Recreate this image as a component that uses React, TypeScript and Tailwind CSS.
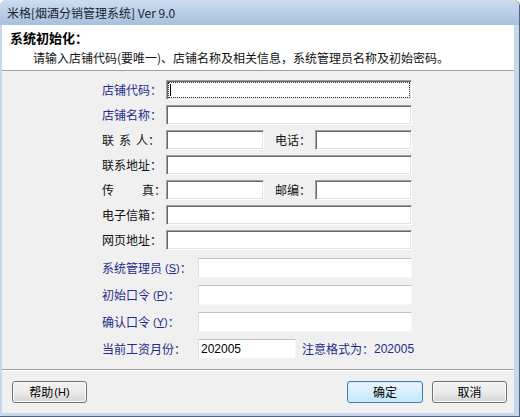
import React from 'react'

const FONT = { fontFamily: '"Noto Sans CJK SC", "Liberation Sans", sans-serif' }

// sunken 3D edit box (classic style)
function Sunken({ w, focused }: { w: string; focused?: boolean }) {
  return (
    <div
      className={`${w} relative h-[20px] bg-white border border-t-[#a0a0a0] border-l-[#a0a0a0] border-b-white border-r-white shadow-[inset_1px_1px_0_#696969,inset_-1px_-1px_0_#e3e3e3]`}
    >
      {focused && (
        <>
          <div className="absolute inset-[1px] border border-dotted border-[#333]" />
          <div className="absolute left-[3px] top-[3px] w-px h-[12px] bg-black" />
        </>
      )}
    </div>
  )
}

// flat edit box
function Flat({ w, value }: { w: string; value?: string }) {
  return (
    <div className={`${w} h-[20px] flex items-center bg-white border border-t-[#c2c2c2] border-l-[#e0e0e0] border-b-[#f6f6f6] border-r-[#f6f6f6] pl-[2px]`}>
      {value && <span className="text-[12px] leading-none text-black" style={{ fontFamily: '"Liberation Sans", sans-serif' }}>{value}</span>}
    </div>
  )
}

function Label({ children, blue, w = 'w-[64px]' }: { children: React.ReactNode; blue?: boolean; w?: string }) {
  return (
    <div className={`${w} shrink-0 flex items-center text-[12px] leading-[14px] ${blue ? 'text-[#1f2a8a]' : 'text-[#111]'}`}>
      {children}
    </div>
  )
}

function Spread({ chars, w }: { chars: string[]; w: string }) {
  return (
    <span className={`${w} flex justify-between`}>
      {chars.map((c) => (
        <span key={c}>{c}</span>
      ))}
    </span>
  )
}

function Key({ k }: { k: string }) {
  return (
    <span className="text-[11px] ml-[3px]" style={{ fontFamily: '"Liberation Sans", sans-serif' }}>
      (<span className="underline">{k}</span>)
    </span>
  )
}

function Btn({ children, primary, w }: { children: React.ReactNode; primary?: boolean; w: string }) {
  return (
    <div
      className={`${w} h-[22px] rounded-[3px] border flex items-center justify-center text-[12px] text-black ${
        primary
          ? 'border-[#3c7fb1] bg-gradient-to-b from-[#eaf6fd] via-[#d9f0fc] to-[#bee6fd] shadow-[inset_0_0_0_1px_#cdebfb]'
          : 'border-[#707070] bg-gradient-to-b from-[#f2f2f2] via-[#ebebeb] to-[#d4d4d4] shadow-[inset_0_0_0_1px_#fbfbfb]'
      }`}
    >
      {children}
    </div>
  )
}

export default function App() {
  return (
    <div className="w-[520px] h-[417px] flex flex-col bg-[#c6d7ec] border-r border-b border-[#52647c] rounded-t-[6px] overflow-hidden" style={FONT}>
      {/* title bar */}
      <div className="h-[25px] shrink-0 flex items-center px-[7px] bg-gradient-to-b from-[#cddcf0] to-[#a8c0de] text-[12px] text-[#1b2433]">
        米格[烟酒分销管理系统] Ver 9.0
      </div>

      <div className="flex-1 flex flex-col ml-[2px] mr-[5px] mb-[3px] bg-[#f0f0f0]">
        {/* header */}
        <div className="h-[46px] shrink-0 bg-white border-b border-[#a0a0a0] flex flex-col pl-[8px] pt-[5px]">
          <div className="text-[13px] font-bold leading-[16px] text-black">系统初始化：</div>
          <div className="text-[12px] leading-[14px] text-[#111] pl-[23px] mt-[5px]">
            请输入店铺代码(要唯一)、店铺名称及相关信息，系统管理员名称及初始密码。
          </div>
        </div>

        {/* form */}
        <div className="h-[299px] shrink-0 flex flex-col pt-[9px] pl-[100px] border-b border-[#a0a0a0]">
          <div className="flex flex-col gap-[5px]">
            <div className="flex">
              <Label blue>店铺代码：</Label>
              <Sunken w="w-[246px]" focused />
            </div>
            <div className="flex">
              <Label blue>店铺名称：</Label>
              <Sunken w="w-[246px]" />
            </div>
            <div className="flex">
              <Label>
                <Spread chars={['联', '系', '人']} w="w-[46px]" />：
              </Label>
              <Sunken w="w-[98px]" />
              <Label w="w-[40px] ml-[11px]">电话：</Label>
              <Sunken w="w-[97px]" />
            </div>
            <div className="flex">
              <Label>联系地址：</Label>
              <Sunken w="w-[246px]" />
            </div>
            <div className="flex">
              <Label>
                <Spread chars={['传', '真']} w="w-[53px]" />：
              </Label>
              <Sunken w="w-[98px]" />
              <Label w="w-[40px] ml-[11px]">邮编：</Label>
              <Sunken w="w-[97px]" />
            </div>
            <div className="flex">
              <Label>电子信箱：</Label>
              <Sunken w="w-[246px]" />
            </div>
            <div className="flex">
              <Label>网页地址：</Label>
              <Sunken w="w-[246px]" />
            </div>
          </div>

          <div className="flex flex-col gap-[7px] mt-[8px]">
            <div className="flex">
              <Label blue w="w-[96px]">
                系统管理员<Key k="S" />：
              </Label>
              <Flat w="w-[214px]" />
            </div>
            <div className="flex">
              <Label blue w="w-[96px]">
                初始口令<Key k="P" />：
              </Label>
              <Flat w="w-[214px]" />
            </div>
            <div className="flex">
              <Label blue w="w-[96px]">
                确认口令<Key k="Y" />：
              </Label>
              <Flat w="w-[214px]" />
            </div>
            <div className="flex">
              <Label blue w="w-[96px]">当前工资月份：</Label>
              <Flat w="w-[98px]" value="202005" />
              <Label blue w="w-[116px] ml-[6px]">
                注意格式为：<span style={{ fontFamily: '"Liberation Sans", sans-serif' }}>202005</span>
              </Label>
            </div>
          </div>
        </div>

        {/* footer */}
        <div className="flex-1 border-t border-white flex items-center pl-[10px] pr-[7px]">
          <Btn w="w-[75px]">
            帮助<span className="text-[11px] ml-[1px]" style={{ fontFamily: '"Liberation Sans", sans-serif' }}>(H)</span>
          </Btn>
          <div className="flex-1" />
          <Btn primary w="w-[76px]">确定</Btn>
          <div className="w-[9px]" />
          <Btn w="w-[75px]">取消</Btn>
        </div>
      </div>
    </div>
  )
}
